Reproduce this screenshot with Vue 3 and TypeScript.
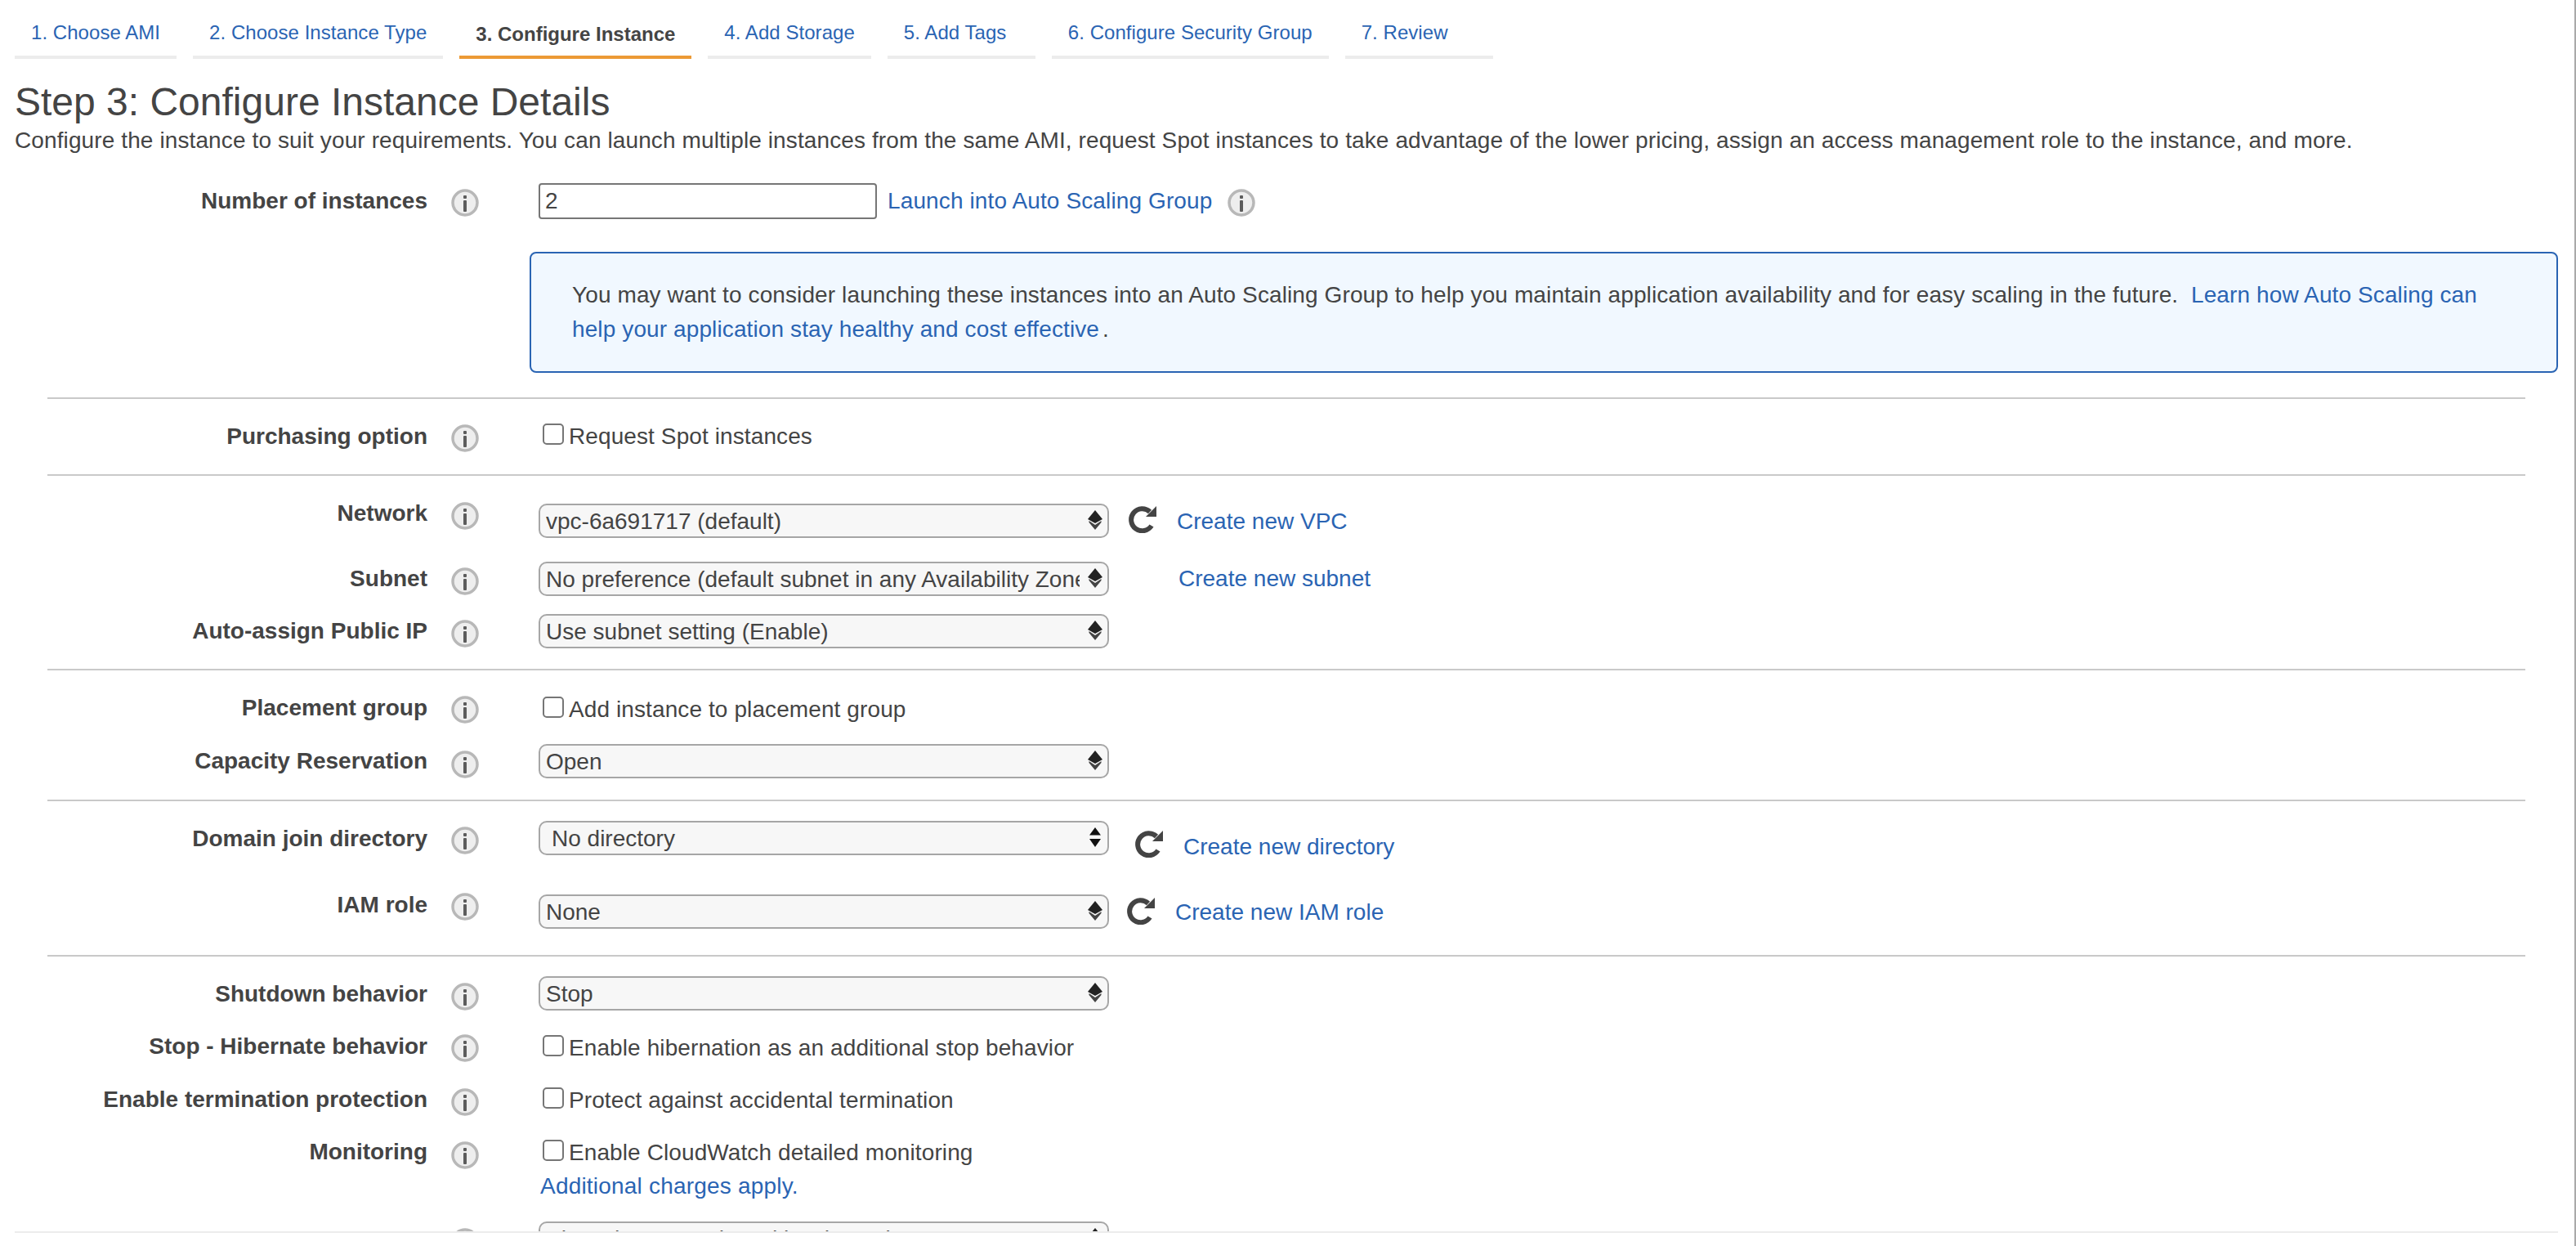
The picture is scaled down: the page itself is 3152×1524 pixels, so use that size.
<script setup lang="ts">
interface Row {
  label: string
  top: number
  height: number
  labelY: number
  iconY: number
  controlY: number
  select?: string
  indent?: boolean
  plainArrows?: boolean
  check?: string
  note?: string
  refreshGap?: number
  refreshY?: number
  link?: string
  linkGap?: number
  linkY?: number
  divider?: boolean
}

const tabs = [
  '1. Choose AMI',
  '2. Choose Instance Type',
  '3. Configure Instance',
  '4. Add Storage',
  '5. Add Tags',
  '6. Configure Security Group',
  '7. Review',
]
const activeTab = 2

const rows: Row[] = [
  { label: 'Purchasing option', top: 488, height: 92, labelY: 534, iconY: 536, controlY: 518, check: 'Request Spot instances', divider: true },
  { label: 'Network', top: 582, height: 95, labelY: 628, iconY: 631, controlY: 616, select: 'vpc-6a691717 (default)', refreshGap: 23, refreshY: 618, link: 'Create new VPC', linkGap: 25, linkY: 638 },
  { label: 'Subnet', top: 677, height: 64, labelY: 708, iconY: 711, controlY: 687, select: 'No preference (default subnet in any Availability Zone)', link: 'Create new subnet', linkGap: 85, linkY: 708 },
  { label: 'Auto-assign Public IP', top: 741, height: 77, labelY: 772, iconY: 775, controlY: 751, select: 'Use subnet setting (Enable)', divider: true },
  { label: 'Placement group', top: 820, height: 81, labelY: 866, iconY: 868, controlY: 852, check: 'Add instance to placement group' },
  { label: 'Capacity Reservation', top: 901, height: 77, labelY: 931, iconY: 935, controlY: 910, select: 'Open', divider: true },
  { label: 'Domain join directory', top: 980, height: 104, labelY: 1026, iconY: 1028, controlY: 1004, select: 'No directory', indent: true, plainArrows: true, refreshGap: 31, refreshY: 1015, link: 'Create new directory', linkGap: 25, linkY: 1036 },
  { label: 'IAM role', top: 1084, height: 84, labelY: 1107, iconY: 1109, controlY: 1094, select: 'None', refreshGap: 21, refreshY: 1097, link: 'Create new IAM role', linkGap: 25, linkY: 1116, divider: true },
  { label: 'Shutdown behavior', top: 1170, height: 89, labelY: 1216, iconY: 1219, controlY: 1194, select: 'Stop' },
  { label: 'Stop - Hibernate behavior', top: 1259, height: 64, labelY: 1280, iconY: 1282, controlY: 1266, check: 'Enable hibernation as an additional stop behavior' },
  { label: 'Enable termination protection', top: 1323, height: 64, labelY: 1345, iconY: 1348, controlY: 1330, check: 'Protect against accidental termination' },
  { label: 'Monitoring', top: 1387, height: 107, labelY: 1409, iconY: 1413, controlY: 1394, check: 'Enable CloudWatch detailed monitoring', note: 'Additional charges apply.' },
  { label: 'Tenancy', top: 1494, height: 60, labelY: 1517, iconY: 1519, controlY: 1494, select: 'Shared - Run a shared hardware instance' },
]

const labelStyle = (r: Row) => ({ marginTop: `${r.labelY - 16 - r.top}px` })
const iconStyle = (r: Row) => ({ marginTop: `${r.iconY - 17 - r.top}px` })
const controlStyle = (r: Row) => ({ marginTop: `${r.controlY - r.top}px` })
const refreshStyle = (r: Row) => ({ marginLeft: `${r.refreshGap}px`, marginTop: `${(r.refreshY ?? 0) - r.controlY}px` })
const linkStyle = (r: Row) => ({ marginLeft: `${r.linkGap}px`, marginTop: `${(r.linkY ?? 0) - 16 - r.controlY}px` })
</script>

<template>
  <div class="page">
    <div class="frame">
      <nav class="tabs">
        <a v-for="(tab, i) in tabs" :key="tab" class="tab" :class="{ active: i === activeTab }">{{ tab }}</a>
      </nav>

      <h1 class="title">Step 3: Configure Instance Details</h1>
      <p class="intro">Configure the instance to suit your requirements. You can launch multiple instances from the same AMI, request Spot instances to take advantage of the lower pricing, assign an access management role to the instance, and more.</p>

      <section class="first">
        <div class="label first-label">Number of instances</div>
        <svg class="info first-icon" viewBox="0 0 34 34"><circle cx="17" cy="17" r="15" /><rect class="dot" x="15" y="8" width="4" height="4" rx="1" /><rect class="dot" x="15" y="14" width="4" height="14" rx="1" /></svg>
        <div class="first-control">
          <input class="text-input" type="text" value="2" />
          <a class="link scaling-link">Launch into Auto Scaling Group</a>
          <svg class="info scaling-icon" viewBox="0 0 34 34"><circle cx="17" cy="17" r="15" /><rect class="dot" x="15" y="8" width="4" height="4" rx="1" /><rect class="dot" x="15" y="14" width="4" height="14" rx="1" /></svg>
        </div>
      </section>

      <div class="notice">
        You may want to consider launching these instances into an Auto Scaling Group to help you maintain application availability and for easy scaling in the future.&nbsp; <a class="link">Learn how Auto Scaling can help your application stay healthy and cost effective</a><span class="stop">.</span>
      </div>

      <hr class="divider lead" />

      <template v-for="r in rows" :key="r.label">
        <div class="row" :style="{ height: `${r.height}px` }">
          <div class="label" :style="labelStyle(r)">{{ r.label }}</div>
          <svg class="info" :style="iconStyle(r)" viewBox="0 0 34 34"><circle cx="17" cy="17" r="15" /><rect class="dot" x="15" y="8" width="4" height="4" rx="1" /><rect class="dot" x="15" y="14" width="4" height="14" rx="1" /></svg>

          <div v-if="r.select" class="control" :style="controlStyle(r)">
            <div class="select-wrap">
              <select class="select" :class="{ indent: r.indent }"><option>{{ r.select }}</option></select>
              <svg v-if="r.plainArrows" class="arrows" viewBox="0 0 18 24"><path d="M9 0 L16 9.5 H2 Z M2 14 H16 L9 24 Z" fill="#111" /></svg>
              <svg v-else class="arrows" viewBox="0 0 18 24"><path d="M9 0 L18 11 L9 16 L0 11 Z" fill="#222" /><path d="M1.5 13 L9 18 L16.5 13 L16.5 15 L9 24 L1.5 15 Z" fill="#444" /></svg>
            </div>
            <svg v-if="r.refreshGap" class="refresh" :style="refreshStyle(r)" viewBox="0 0 35 34">
              <path d="M29 25 A13.5 13.5 0 1 1 27 8" fill="none" stroke="#444" stroke-width="6" />
              <path d="M35 1 V14 H22 Z" fill="#444" />
            </svg>
            <a v-if="r.link" class="link" :style="linkStyle(r)">{{ r.link }}</a>
          </div>

          <div v-else class="control stack" :style="controlStyle(r)">
            <label class="check">
              <input class="box" type="checkbox" />
              <span>{{ r.check }}</span>
            </label>
            <a v-if="r.note" class="link note">{{ r.note }}</a>
          </div>
        </div>
        <hr v-if="r.divider" class="divider" />
      </template>
    </div>
  </div>
</template>

<style scoped>
.page {
  box-sizing: border-box;
  width: 3152px;
  height: 1524px;
  background: #fff;
  border-right: 2px solid #a9a9a9;
  font-family: "Liberation Sans", Arial, sans-serif;
  font-size: 28px;
  color: #444;
}
.frame {
  box-sizing: border-box;
  width: 3112px;
  height: 1508px;
  margin-left: 18px;
  overflow: hidden;
  border-bottom: 2px solid #ececec;
}
.tabs {
  display: flex;
  gap: 20px;
  height: 72px;
}
.tab {
  box-sizing: border-box;
  height: 72px;
  min-width: 181px;
  padding: 24px 20px 12px;
  font-size: 24px;
  line-height: 32px;
  letter-spacing: 0.05px;
  color: #2a64b3;
  border-bottom: 4px solid #ececec;
  white-space: nowrap;
}
.tab.active {
  padding-top: 26px;
  padding-bottom: 10px;
  letter-spacing: 0;
  color: #444;
  font-weight: 700;
  border-bottom-color: #ec9a35;
}
.title {
  margin: 25px 0 0;
  font-size: 48px;
  font-weight: 400;
  line-height: 56px;
  color: #444;
}
.intro {
  margin: 1px 0 0;
  line-height: 36px;
  letter-spacing: 0.11px;
  white-space: nowrap;
}
.first {
  display: flex;
  align-items: flex-start;
  height: 84px;
  margin-top: 34px;
}
.first-label {
  margin-top: 6px;
}
.first-icon {
  margin-top: 7px;
}
.first-control {
  display: flex;
  align-items: flex-start;
}
.text-input {
  box-sizing: border-box;
  width: 414px;
  height: 44px;
  padding: 0 6px;
  border: 2px solid #767676;
  border-radius: 4px;
  font: inherit;
  color: #444;
  outline: none;
}
.scaling-link {
  margin-left: 13px;
  margin-top: 6px;
  letter-spacing: 0.12px;
}
.first-control .scaling-icon {
  margin: 7px 0 0 19px;
}
.notice {
  box-sizing: border-box;
  width: 2482px;
  height: 148px;
  margin-left: 630px;
  padding: 30px 60px 30px 50px;
  background: #f1f8ff;
  border: 2px solid #2a64b3;
  border-radius: 8px;
  line-height: 42px;
  letter-spacing: 0.11px;
}
.stop {
  margin-left: 4px;
}
.link {
  color: #2a64b3;
  line-height: 32px;
  white-space: nowrap;
}
.notice .link {
  white-space: normal;
  line-height: 42px;
}
.divider {
  height: 2px;
  margin: 0 40px;
  border: 0;
  background: #c9c9c9;
}
.divider.lead {
  margin-top: 30px;
}
.row {
  display: flex;
  align-items: flex-start;
}
.label {
  flex: 0 0 505px;
  width: 505px;
  font-weight: 700;
  line-height: 32px;
  text-align: right;
  white-space: nowrap;
}
.info {
  flex: 0 0 34px;
  width: 34px;
  height: 34px;
  margin-left: 29px;
  margin-right: 73px;
}
.info circle {
  fill: #eeeeee;
  stroke: #b8b8b8;
  stroke-width: 3.5;
}
.info .dot {
  fill: #5c5c5c;
}
.control {
  display: flex;
  align-items: flex-start;
}
.control.stack {
  flex-direction: column;
}
.select-wrap {
  position: relative;
  width: 698px;
  height: 42px;
  flex: none;
}
.select {
  box-sizing: border-box;
  display: block;
  width: 698px;
  height: 42px;
  padding: 0 34px 0 7px;
  appearance: none;
  -webkit-appearance: none;
  background: #f7f7f7;
  border: 2px solid #a6a6a6;
  border-radius: 10px;
  font: inherit;
  color: #444;
  outline: none;
}
.select.indent {
  padding-left: 14px;
}
.arrows {
  position: absolute;
  right: 8px;
  top: 8px;
  width: 18px;
  height: 24px;
  pointer-events: none;
}
.refresh {
  flex: none;
  width: 35px;
  height: 34px;
}
.check {
  display: flex;
  align-items: flex-start;
  margin-left: 5px;
  line-height: 32px;
  letter-spacing: 0.1px;
  white-space: nowrap;
}
.box {
  box-sizing: border-box;
  flex: none;
  width: 26px;
  height: 26px;
  margin: 0 6px 0 0;
  appearance: none;
  -webkit-appearance: none;
  background: #fff;
  border: 2px solid #767676;
  border-radius: 5px;
}
.note {
  margin-top: 9px;
  margin-left: 2px;
  letter-spacing: 0.2px;
}
</style>
<style>
html, body {
  margin: 0;
  background: #fff;
}
</style>
